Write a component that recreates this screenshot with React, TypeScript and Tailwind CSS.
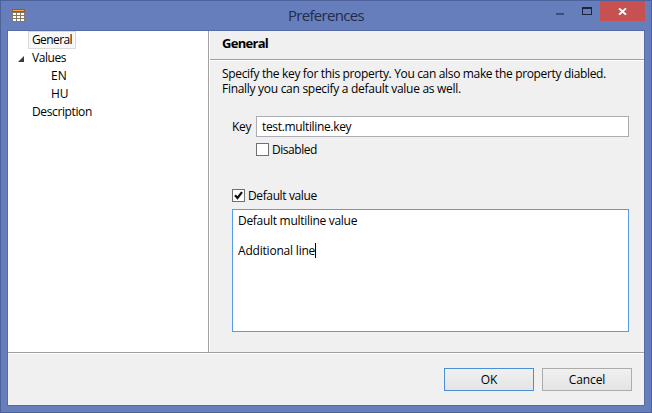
import { useState } from "react";

const page = "font-['Open_Sans','Noto_Sans',sans-serif]";

function GridIcon() {
  return (
    <svg width="13" height="13" viewBox="0 0 13 13" shapeRendering="crispEdges">
      <rect width="13" height="13" fill="#85776a" />
      <rect width="13" height="3" fill="#a5561f" />
      <rect x="1" y="1" width="11" height="1" fill="#f7a840" />
      {[4, 7, 10].map((y) =>
        [1, 5, 9].map((x) => (
          <rect key={`${x}-${y}`} x={x} y={y} width="3" height="2" fill="#fffdf2" />
        )),
      )}
    </svg>
  );
}

function TitleBar() {
  return (
    <header className="relative flex h-[29px] shrink-0 items-start justify-between">
      <div className="pt-2 pl-[11px]">
        <GridIcon />
      </div>
      <h1 className="absolute top-[4px] left-[287px] text-[15px] leading-5 tracking-[-0.7px] text-[#232c48]">
        Preferences
      </h1>
      <div className="flex pr-1.5">
        <svg width="44" height="20" shapeRendering="crispEdges">
          <rect x="0" y="12" width="8" height="2" fill="#3d4d7c" />
          <rect x="26.5" y="6.5" width="9" height="7" fill="none" stroke="#1d253c" />
          <rect x="26" y="6" width="10" height="2" fill="#1d253c" />
        </svg>
        <button className="flex h-5 w-[45px] items-start justify-center bg-[#c75050] pt-[7px]">
          <svg width="9" height="7" viewBox="0 0 9 7">
            <path d="M1 .3 8 6.7M8 .3 1 6.7" stroke="#fff" strokeWidth="1.9" />
          </svg>
        </button>
      </div>
    </header>
  );
}

function Tree() {
  return (
    <nav className="flex w-[200px] shrink-0 flex-col bg-white pl-5 leading-4">
      <div className="h-[18px] w-12 border border-[#dadada] bg-[#f7f7f7] pl-[3px] tracking-[-0.6px]">General</div>
      <div className="relative h-[18px] pl-1 pt-px tracking-[-0.45px]">
        <svg width="6" height="6" className="absolute top-[7px] left-[-10px]">
          <path d="M6 0V6H0Z" fill="#3b3b3b" />
        </svg>
        Values
      </div>
      <div className="h-[18px] pt-px pl-[23px]">EN</div>
      <div className="h-[18px] pt-px pl-[23px]">HU</div>
      <div className="h-[18px] pt-px pl-1 tracking-[-0.38px]">Description</div>
    </nav>
  );
}

function CheckBox({ checked, onChange }: { checked: boolean; onChange: () => void }) {
  return (
    <button
      role="checkbox"
      aria-checked={checked}
      onClick={onChange}
      className="flex size-[13px] shrink-0 items-center justify-center border border-[#707070] bg-white"
    >
      {checked && (
        <svg width="9" height="9" viewBox="0 0 9 9">
          <path d="M1 4.2 3.5 7 8 1.2" fill="none" stroke="#111" strokeWidth="2.2" />
        </svg>
      )}
    </button>
  );
}

function Settings() {
  const [disabled, setDisabled] = useState(false);
  const [hasDefault, setHasDefault] = useState(true);
  return (
    <main className="flex min-w-0 flex-1 flex-col border-l border-white">
      <h2 className="h-[28px] shrink-0 pt-[3px] pl-3 text-[13px] leading-[18px] font-bold tracking-[-0.7px]">General</h2>
      <div className="h-0.5 border-t border-b border-t-[#a0a0a0] border-b-white" />
      <p className="pt-[5px] pl-3 leading-[15px] whitespace-nowrap">
        <span className="tracking-[-0.34px]">Specify the key for this property. You can also make the property diabled.</span>
        <br />
        <span className="tracking-[-0.29px]">Finally you can specify a default value as well.</span>
      </p>
      <div className="mt-5 ml-[22px] flex h-[21px] items-center">
        <label className="w-6 tracking-[-0.3px]">Key</label>
        <div className="flex h-[21px] w-[373px] items-center border border-[#abadb3] bg-white pl-[5px]">
          <span className="tracking-[-0.34px]">test.multiline.key</span>
        </div>
      </div>
      <div className="mt-[6px] ml-[46px] flex h-[13px] items-center gap-[3px]">
        <CheckBox checked={disabled} onChange={() => setDisabled(!disabled)} />
        <span className="tracking-[-0.45px]">Disabled</span>
      </div>
      <div className="mt-[33px] ml-[22px] flex h-[13px] items-center gap-[3px]">
        <CheckBox checked={hasDefault} onChange={() => setHasDefault(!hasDefault)} />
        <span className="tracking-[-0.38px]">Default value</span>
      </div>
      <div className="mt-[7px] ml-[22px] h-[123px] w-[397px] border border-[#569de5] bg-white pt-[3px] pl-[5px] leading-[15px]">
        <p className="tracking-[-0.29px]">Default multiline value</p>
        <p className="h-[15px]" />
        <p className="flex">
          <span className="tracking-[-0.2px]">Additional line</span>
          <i className="h-[15px] w-px bg-black" />
        </p>
      </div>
    </main>
  );
}

export default function App() {
  return (
    <div className={`${page} flex h-[413px] w-[652px] flex-col overflow-hidden border border-[#4c629b] bg-[#677ebc] text-[12px] text-black`}>
      <TitleBar />
      <div className="mx-1.5 flex h-[376px] flex-col border border-[#566ba5] bg-[#f0f0f0]">
        <div className="flex h-[321px] shrink-0">
          <Tree />
          <div className="w-px bg-[#a0a0a0]" />
          <Settings />
        </div>
        <div className="h-0.5 shrink-0 border-t border-b border-t-[#a0a0a0] border-b-white" />
        <footer className="flex justify-end gap-2 pt-[14px] pr-3">
          <button className="h-[23px] w-[90px] border border-[#4a90d9] bg-linear-to-b from-[#f0f0f0] to-[#e4e4e4] leading-5">OK</button>
          <button className="h-[23px] w-[90px] border border-[#acacac] bg-linear-to-b from-[#f0f0f0] to-[#e4e4e4] leading-5 tracking-[-0.1px]">Cancel</button>
        </footer>
      </div>
    </div>
  );
}
